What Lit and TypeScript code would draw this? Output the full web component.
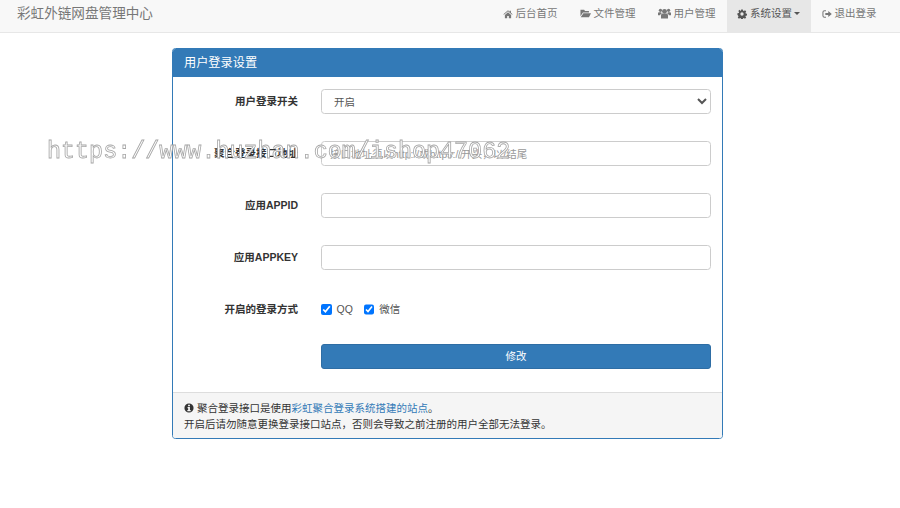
import { LitElement, html, css, svg } from 'lit';
import { customElement } from 'lit/decorators.js';

const icons = {
  home: svg`<path d="M12 3 1 12.5l1.2 1.400L12 5.600l9.800 8.300 1.200-1.400-4-3.400V4h-3v2.600zM4.500 14.500V22h5.500v-5.500h4V22h5.500v-7.500L12 8z"/>`,
  folder: svg`<path d="M1 4h8l2 2.500h8.500V10H6.500L1 18zM7.500 11.500H24L19.500 20H1.500z"/>`,
  users: svg`<circle cx="12" cy="8" r="4.500"/><circle cx="4.500" cy="6" r="3"/><circle cx="19.500" cy="6" r="3"/><path d="M5.500 21v-5.500c0-2.500 2-3.500 3.500-3.500h6c1.500 0 3.500 1 3.500 3.500V21zM0 15v-3.500C0 10 1.200 9.500 2.500 9.500h3.300c.3 1 .8 1.700 1.400 2.300-2 .4-3.200 1.700-3.200 3.200zM24 15v-3.500c0-1.500-1.200-2-2.500-2h-3.300c-.3 1-.8 1.700-1.400 2.300 2 .4 3.200 1.700 3.200 3.200z"/>`,
  cog: svg`<path fill-rule="evenodd" d="M10 1h4l.7 3.200 1.800.8 2.800-1.800 2.800 2.800-1.800 2.800.8 1.800 3.100.7v4l-3.200.7-.8 1.800 1.800 2.800-2.800 2.800-2.800-1.800-1.800.8-.7 3.200h-4l-.7-3.200-1.800-.8-2.800 1.800-2.800-2.800 1.800-2.800-.8-1.800L1 14v-4l3.200-.7.800-1.800-1.800-2.800 2.800-2.800L8.800 5l.5-.8zM12 8a4 4 0 1 0 0 8 4 4 0 0 0 0-8z"/>`,
  logout: svg`<path d="M9.500 3H6a5 5 0 0 0-5 5v8a5 5 0 0 0 5 5h3.500v-2.500H6A2.500 2.500 0 0 1 3.500 16V8A2.500 2.500 0 0 1 6 5.500h3.500zM15 5v4.500H8v5h7V19l8.500-7z"/>`,
  info: svg`<path fill-rule="evenodd" d="M12 1a11 11 0 1 0 0 22 11 11 0 0 0 0-22zM9.800 4h4.400v3.500H9.800zM8.500 9.500h5.700V17h1.800v3H8v-3h2v-4.500H8.500z"/>`,
};

const icon = (name: keyof typeof icons) =>
  html`<svg class="icon ${name}" viewBox=${name === 'users' ? '0 2 24 20' : '0 0 24 24'} fill="currentColor">${icons[name]}</svg>`;

@customElement('app-root')
class AppRoot extends LitElement {
  static styles = css`
    :host {
      display: block;
      position: relative;
      height: 508px;
      overflow: hidden;
      background: #fff;
      color: #333;
      font: 10.5px/15px "Liberation Sans", "Noto Sans CJK SC", sans-serif;
    }

    * {
      box-sizing: border-box;
    }

    .navbar {
      display: flex;
      justify-content: space-between;
      height: 33px;
      padding: 0 12.500px 0 17px;
      background: #f8f8f8;
      border-bottom: 1px solid #e7e7e7;
      color: #777;
    }

    .brand {
      font-size: 13.600px;
      line-height: 27px;
    }

    .nav {
      display: flex;
    }

    .nav a {
      display: flex;
      align-items: center;
      gap: 3px;
      padding: 0 11px 5px;
      height: 32px;
      white-space: nowrap;
    }

    .nav a.active {
      padding: 0 10.500px 5px;
      background: #e7e7e7;
      color: #555;
    }

    .caret {
      margin-left: -1px;
      border-top: 3.500px solid currentColor;
      border-left: 3.500px solid transparent;
      border-right: 3.500px solid transparent;
    }

    .icon {
      width: 10px;
      height: 10px;
      flex: none;
    }

    .icon.folder {
      width: 11px;
      height: 11px;
    }

    .icon.users {
      width: 13px;
      height: 11px;
    }

    .panel {
      width: 551px;
      margin: 15px 0 0 172px;
      border: 1px solid #337ab7;
      border-radius: 3.500px;
      overflow: hidden;
    }

    .panel-heading {
      height: 28px;
      padding: 0 11px;
      background: #337ab7;
      color: #fff;
      font-size: 12.200px;
      line-height: 29px;
    }

    .form {
      display: grid;
      grid-template-columns: 125px 390px;
      column-gap: 23px;
      row-gap: 27px;
      align-items: center;
      padding: 12px 0 0;
    }

    label.name {
      font-weight: bold;
      text-align: right;
    }

    .control {
      display: block;
      width: 100%;
      height: 25px;
      padding: 0 8px;
      background: #fff;
      border: 1px solid #ccc;
      border-radius: 3.500px;
      color: #555;
      font: inherit;
      outline: none;
    }

    input.control::placeholder {
      color: #999;
    }

    .checks {
      display: flex;
      align-items: center;
      height: 25px;
      color: #555;
    }

    .checks label {
      display: flex;
      align-items: center;
      margin-right: 11px;
    }

    .checks input {
      width: 10.500px;
      height: 10.500px;
      margin: 0 5px 0 0;
    }

    .submit {
      grid-column: 2;
      height: 25px;
      margin-top: -5px;
      background: #337ab7;
      border: 1px solid #2e6da4;
      border-radius: 3px;
      color: #fff;
      font: inherit;
    }

    .panel-footer {
      height: 46px;
      margin-top: 23px;
      padding: 7px 11px 0;
      background: #f5f5f5;
      border-top: 1px solid #ddd;
      line-height: 16px;
    }

    .panel-footer .icon {
      vertical-align: -1px;
    }

    .panel-footer a {
      color: #337ab7;
    }

    .watermark {
      position: absolute;
      left: 47px;
      top: 138px;
      color: #fff;
      font: 23.400px/28px "Liberation Mono", monospace;
      -webkit-text-stroke: 0.800px #a6a6a6;
      white-space: nowrap;
      pointer-events: none;
      will-change: transform;
    }
  `;

  render() {
    return html`
      <nav class="navbar">
        <div class="brand">彩虹外链网盘管理中心</div>
        <div class="nav">
          <a>${icon('home')}后台首页</a>
          <a>${icon('folder')}文件管理</a>
          <a>${icon('users')}用户管理</a>
          <a class="active">${icon('cog')}系统设置<span class="caret"></span></a>
          <a>${icon('logout')}退出登录</a>
        </div>
      </nav>
      <section class="panel">
        <div class="panel-heading">用户登录设置</div>
        <div class="form">
          <label class="name">用户登录开关</label>
          <select class="control"><option>开启</option></select>
          <label class="name">聚合登录接口地址</label>
          <input class="control" placeholder="接口地址须以http://或https://开头，以/结尾" />
          <label class="name">应用APPID</label>
          <input class="control" />
          <label class="name">应用APPKEY</label>
          <input class="control" />
          <label class="name">开启的登录方式</label>
          <div class="checks">
            <label><input type="checkbox" checked />QQ</label>
            <label><input type="checkbox" checked />微信</label>
          </div>
          <button class="submit">修改</button>
        </div>
        <div class="panel-footer">
          ${icon('info')} 聚合登录接口是使用<a>彩虹聚合登录系统搭建的站点</a>。<br />
          开启后请勿随意更换登录接口站点，否则会导致之前注册的用户全部无法登录。
        </div>
      </section>
      <div class="watermark">https://www.huzhan.com/ishop47062</div>
    `;
  }
}

export default AppRoot;
